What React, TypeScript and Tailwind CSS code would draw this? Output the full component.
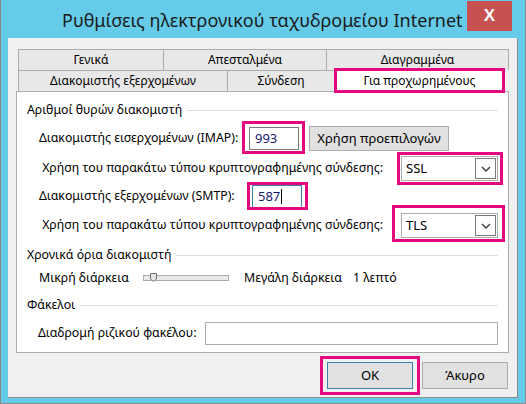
import React from "react";

function Pink({ className }: { className: string }) {
  return <div className={`pointer-events-none absolute z-20 border-[3px] border-[#e5097f] ${className}`} />;
}

function Group({ title }: { title: string }) {
  return (
    <div className="flex h-[16px] items-center">
      <span>{title}</span>
      <div className="ml-[5px] h-px flex-1 bg-[#dcdcdc]" />
    </div>
  );
}

function Chevron() {
  return (
    <svg width="10" height="6" viewBox="0 0 10 6">
      <polyline points="1,1 5,5 9,1" fill="none" stroke="#3c3c3c" strokeWidth="1.4" />
    </svg>
  );
}

function Select({ value }: { value: string }) {
  return (
    <div className="flex h-[25px] w-[97px] items-center border border-[#acacac] bg-white pr-[1px]">
      <span className="flex-1 pl-[4px] text-[13px]">{value}</span>
      <div className="flex h-[21px] w-[21px] items-center justify-center border border-[#7a7a7a] bg-white">
        <Chevron />
      </div>
    </div>
  );
}

export default function App() {
  return (
    <div className="h-[404px] w-[526px] border-x border-b border-[#8a8a8a] bg-[#65cbe9] font-['Noto_Sans',sans-serif] text-[12px] text-black">
      {/* title bar */}
      <div className="flex h-[38px]">
        <div className="ml-[61px] mt-[8px] text-[18px] leading-[24px] text-[#1b1b1b]">
          Ρυθμίσεις ηλεκτρονικού ταχυδρομείου Internet
        </div>
        <div className="ml-auto mr-[13px] mt-[1px] flex h-[30px] w-[45px] items-center justify-center bg-[#c75050] font-['Liberation_Sans',sans-serif] text-[17px] font-bold text-white">
          X
        </div>
      </div>

      {/* client area */}
      <div className="mx-[7px] h-[360px] border-b border-r border-[#8c8c8c] bg-[#f0f0f0] pl-[8px] pt-[11px]">
        {/* tabs */}
        <div className="ml-[2px]">
          <div className="flex h-[21px]">
            <div className="flex w-[145px] items-center justify-center border-l border-t border-[#acacac] bg-[#e8e8e8]">Γενικά</div>
            <div className="flex w-[163px] items-center justify-center border-l border-t border-[#acacac] bg-[#e8e8e8]">Απεσταλμένα</div>
            <div className="flex w-[183px] items-center justify-center border-x border-t border-[#acacac] bg-[#e8e8e8]">Διαγραμμένα</div>
          </div>
          <div className="flex h-[21px] items-start">
            <div className="flex h-[21px] w-[209px] items-center justify-center border-l border-t border-[#acacac] bg-[#e8e8e8]">Διακομιστής εξερχομένων</div>
            <div className="flex h-[21px] w-[107px] items-center justify-center border-l border-t border-[#acacac] bg-[#e8e8e8]">Σύνδεση</div>
            <div className="relative z-10 -mt-[2px] flex h-[25px] w-[171px] items-center justify-center border-[3px] border-[#e5097f] bg-white">
              Για προχωρημένους
            </div>
          </div>
        </div>

        {/* panel */}
        <div className="h-[262px] w-[493px] border border-[#adadad] bg-white px-[10px] text-[12.3px]">
          <div className="mt-[10px]">
            <Group title="Αριθμοί θυρών διακομιστή" />
          </div>

          <div className="mt-[8px] flex h-[25px] items-center">
            <span className="ml-[12px] w-[210px]">Διακομιστής εισερχομένων (IMAP):</span>
            <div className="relative">
              <div className="h-[23px] w-[50px] border border-[#7a7a7a] bg-white pl-[5px] text-[13px] leading-[21px] text-[#1a1a6e]">993</div>
              <Pink className="-bottom-[4px] -left-[7px] -right-[6px] -top-[6px]" />
            </div>
            <div className="ml-[10px] flex h-[25px] w-[140px] items-center justify-center border border-[#adadad] bg-[#e1e1e1] text-[13px]">
              Χρήση προεπιλογών
            </div>
          </div>

          <div className="mt-[5px] flex h-[25px] items-center">
            <span className="w-[356px] text-right">Χρήση του παρακάτω τύπου κρυπτογραφημένης σύνδεσης:</span>
            <div className="relative ml-[18px]">
              <Select value="SSL" />
              <Pink className="-bottom-[4px] -left-[4px] -right-[5px] -top-[4px]" />
            </div>
          </div>

          <div className="mt-[4px] flex h-[23px] items-center">
            <span className="ml-[12px] w-[213px]">Διακομιστής εξερχομένων (SMTP):</span>
            <div className="relative">
              <div className="flex h-[23px] w-[50px] items-center border border-[#3c7fb1] bg-white pl-[5px] text-[13px] text-[#1a1a6e]">
                587<span className="ml-[1px] h-[15px] w-px bg-black" />
              </div>
              <Pink className="-bottom-[2px] -left-[5px] -right-[6px] -top-[3px]" />
            </div>
          </div>

          <div className="mt-[5px] flex h-[25px] items-center">
            <span className="w-[356px] text-right">Χρήση του παρακάτω τύπου κρυπτογραφημένης σύνδεσης:</span>
            <div className="relative ml-[18px]">
              <Select value="TLS" />
              <Pink className="-bottom-[4px] -left-[9px] -right-[7px] -top-[8px]" />
            </div>
          </div>

          <div className="mt-[9px]">
            <Group title="Χρονικά όρια διακομιστή" />
          </div>

          <div className="mt-[7px] flex h-[16px] items-center">
            <span className="ml-[12px] w-[104px]">Μικρή διάρκεια</span>
            <div className="relative h-[6px] w-[86px] border border-[#acacac] bg-[#e7eaea]">
              <svg className="absolute -top-[3px] left-[6px]" width="7" height="9" viewBox="0 0 7 9">
                <path d="M0.5 0.5 H6.5 V6 L3.5 8.5 L0.5 6 Z" fill="#e5e5e5" stroke="#707070" strokeWidth="1" />
              </svg>
            </div>
            <span className="ml-[15px] w-[109px]">Μεγάλη διάρκεια</span>
            <span>1 λεπτό</span>
          </div>

          <div className="mt-[11px]">
            <Group title="Φάκελοι" />
          </div>

          <div className="mt-[9px] flex h-[23px] items-center">
            <span className="ml-[11px] w-[167px]">Διαδρομή ριζικού φακέλου:</span>
            <div className="h-[23px] flex-1 border border-[#acacac] bg-white" />
          </div>
        </div>

        {/* buttons */}
        <div className="mt-[9px] flex justify-end gap-[9px] pr-[9px]">
          <div className="relative">
            <div className="flex h-[27px] w-[86px] items-center justify-center border border-[#3c7fb1] bg-[#e1e1e1] text-[13px]">OK</div>
            <Pink className="-bottom-[6px] -left-[7px] -right-[7px] -top-[6px]" />
          </div>
          <div className="flex h-[27px] w-[86px] items-center justify-center border border-[#adadad] bg-[#e1e1e1] text-[13px]">Άκυρο</div>
        </div>
      </div>
    </div>
  );
}
